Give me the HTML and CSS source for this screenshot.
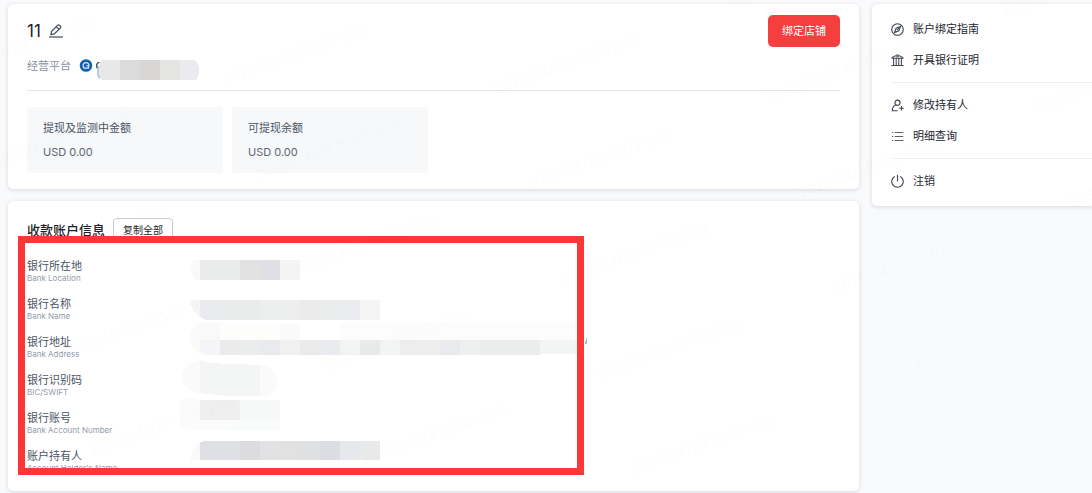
FILE: index.html
```
<!DOCTYPE html>
<html lang="zh-CN">
<head>
  <meta charset="utf-8">
  <title>收款账户</title>
  <link rel="stylesheet" href="styles.css">
</head>
<body>
  <div class="page">
    <main class="main">
      <section class="card account">
        <div class="account-head">
          <h1>11</h1>
          <button class="icon-button" type="button" aria-label="编辑">
            <svg width="14" height="14" viewBox="0 0 14 14" fill="none" stroke="#4b5260" stroke-width="1.3">
              <path d="M2 10.6 2.6 7.4 8.4 1.4Q9.5.4 10.6 1.4L11.2 2Q12.2 3.1 11.2 4.2L5.2 10ZM7.3 2.8 9.9 5.4" />
              <path d="M0 13H14" stroke="#8d949c" stroke-width="2" />
            </svg>
          </button>
          <button class="bind-button" type="button">绑定店铺</button>
        </div>

        <div class="platform">
          <span>经营平台</span>
          <svg class="platform-logo" width="120" height="22" viewBox="79 58 120 22">
            <circle cx="86" cy="65.5" r="6.3" fill="#1660ab" />
            <circle cx="86" cy="65.5" r="2.9" fill="none" stroke="#d7e7f7" stroke-width="1.2" />
            <path d="M86.2 65.8H88.5V68.6" fill="none" stroke="#d7e7f7" />
            <path d="M99.5 62.5Q96.7 62.5 96.7 65.5T98 68.5" fill="none" stroke="#29303b" stroke-width="1.2" />
            <g shape-rendering="crispEdges">
              <path d="M100 64Q97 67 97 72T100 80Z" fill="#b9cfe6" />
              <path d="M102 60H120V80H102Q99 78 99 70T102 60Z" fill="#e8e8e9" />
              <path d="M120 60H140V80H120Z" fill="#dcdbdc" />
              <path d="M140 60H160V80H140Z" fill="#d9d7d5" />
              <path d="M160 60H180V80H160Z" fill="#e4e4e2" />
              <path d="M180 60H194Q199 63 199 70T196 80H180Z" fill="#eaebee" />
            </g>
          </svg>
        </div>

        <div class="stats">
          <div class="stat">
            <span>提现及监测中金额</span>
            <span class="amount">USD 0.00</span>
          </div>
          <div class="stat">
            <span>可提现余额</span>
            <span class="amount">USD 0.00</span>
          </div>
        </div>
      </section>

      <section class="card bank">
        <div class="bank-head">
          <h2>收款账户信息</h2>
          <button class="copy-button" type="button">复制全部</button>
        </div>

        <dl class="bank-list">
          <dt>银行所在地 <small>Bank Location</small></dt>
          <dt>银行名称 <small>Bank Name</small></dt>
          <dt>银行地址 <small>Bank Address</small></dt>
          <dt>银行识别码 <small>BIC/SWIFT</small></dt>
          <dt>银行账号 <small>Bank Account Number</small></dt>
          <dt>账户持有人 <small>Account Holder's Name</small></dt>
        </dl>

        <!-- Masked values -->
        <svg class="masks" width="410" height="230" viewBox="180 250 410 230" shape-rendering="crispEdges" aria-hidden="true">
          <!-- Bank location -->
          <path d="M200 260H194Q191 264 191 270T196 280H200Z" fill="#f9f9f9" />
          <path d="M200 260H240V280H200Z" fill="#e9ebea" />
          <path d="M240 260H260V280H240Z" fill="#e3e2e3" />
          <path d="M260 260H280V280H260Z" fill="#dfe0e5" />
          <path d="M280 260H300V280H280Z" fill="#f4f4f4" />
          <!-- Bank name -->
          <path d="M190 300H200V317Q191 312 190 300Z" fill="#f6f6f7" />
          <path d="M200 300H220V320H206L200 317Z" fill="#e9eaed" />
          <path d="M220 300H260V320H220Z" fill="#e9ecea" />
          <path d="M260 300H300V320H260Z" fill="#edefee" />
          <path d="M300 300H320V320H300Z" fill="#ecebeb" />
          <path d="M320 300H340V320H320Z" fill="#ebedec" />
          <path d="M340 300H360V320H340Z" fill="#ebecef" />
          <path d="M360 300H380V320H360Z" fill="#f5f5f6" />
          <!-- Bank address -->
          <path d="M220 323H200Q190 328 190 340H220Z" fill="#f9f9f9" />
          <path d="M220 323H280V340H220Z" fill="#fdfdfc" />
          <path d="M280 323H300V340H280Z" fill="#fafafa" />
          <path d="M340 323H577V340H340Z" fill="#fcfcfc" />
          <path d="M190 340H200V354Q193 350 190 340Z" fill="#fbfaf8" />
          <path d="M200 340H220V355H204L200 353Z" fill="#f4f5f8" />
          <path d="M220 340H240V355H220Z" fill="#ecebec" />
          <path d="M240 340H260V355H240Z" fill="#ebedec" />
          <path d="M260 340H280V355H260Z" fill="#e9eaee" />
          <path d="M280 340H300V355H280Z" fill="#f0f0f1" />
          <path d="M300 340H320V355H300Z" fill="#ebeaea" />
          <path d="M320 340H340V355H320Z" fill="#eaebee" />
          <path d="M340 340H360V355H340Z" fill="#f2f5f4" />
          <path d="M360 340H380V355H360Z" fill="#e8ebea" />
          <path d="M380 340H400V355H380Z" fill="#f3f5f4" />
          <path d="M400 340H440V355H400Z" fill="#eeedee" />
          <path d="M440 340H460V355H440Z" fill="#e9eaee" />
          <path d="M460 340H480V355H460Z" fill="#eef0ef" />
          <path d="M480 340H540V355H480Z" fill="#ebecec" />
          <path d="M540 340H577V354H540Z" fill="#f3f5f5" />
          <path d="M585 341H586V344H585ZM586 338H587V344H586Z" fill="#92c6ef" />
          <!-- BIC/SWIFT -->
          <path d="M200 360Q182 364 182 377T200 394Z" fill="#fafafb" />
          <path d="M200 360 208 363 260 365V396L226 396 200 393Z" fill="#f4f5f5" />
          <path d="M260 365Q277 367 277 381T260 397Z" fill="#f9faf9" />
          <!-- Bank account number -->
          <path d="M200 399Q182 398 180 401V427Q188 430 200 430Z" fill="#fbfbfb" />
          <path d="M200 400H240V420H200Z" fill="#efefef" />
          <path d="M240 400H280V420H240Z" fill="#f7f9f8" />
          <path d="M200 420H280V431H260L200 430Z" fill="#fafcfb" />
          <!-- Account holder -->
          <path d="M200 442Q191 447 191 460H200Z" fill="#f9f9fa" />
          <path d="M200 442 205 441H240V460H200Z" fill="#dfe0e3" />
          <path d="M240 441H260V460H240Z" fill="#dcdcde" />
          <path d="M260 441H280V460H260Z" fill="#e1e2e4" />
          <path d="M280 441H300V460H280Z" fill="#e0e1e0" />
          <path d="M300 441H320V460H300Z" fill="#dfe0e1" />
          <path d="M320 441H340V460H320Z" fill="#dcdde2" />
          <path d="M340 441H360V460H340Z" fill="#e7e8eb" />
          <path d="M360 441H380V460H360Z" fill="#e9ebea" />
        </svg>
        <div class="highlight"></div>
      </section>
    </main>

    <aside class="card side">
      <ul>
        <li><a href="#">
          <svg width="13" height="13" viewBox="0 0 14 14" fill="none" stroke="#3f4450" stroke-width="1.2">
            <circle cx="7" cy="7" r="6.2" />
            <path d="M10.2 3.8 8.5 8.5 3.8 10.2 5.5 5.5Z" />
            <path d="M6.3 7.7 8.5 5.5" />
          </svg>
          账户绑定指南</a></li>
        <li><a href="#">
          <svg width="13" height="13" viewBox="0 0 14 14" fill="none" stroke="#3f4450" stroke-width="1.1">
            <path d="M1.2 4.5V3.8L7 .8 12.8 3.8V4.500ZM.5 12.5H13.500M2.800 4.500V12.500M5.600 4.500V12.500M8.400 4.500V12.500M11.200 4.500V12.500" />
            <path d="M5.500 3H8.500" />
          </svg>
          开具银行证明</a></li>
      </ul>
      <ul>
        <li><a href="#">
          <svg width="13" height="13" viewBox="0 0 14 14" fill="none" stroke="#3f4450" stroke-width="1.2">
            <circle cx="7" cy="4" r="2.8" />
            <path d="M5.3 6.3Q1.400 8 1.400 12.600H7.200M8.800 10H13.800M11.300 7.500V12.500" />
          </svg>
          修改持有人</a></li>
        <li><a href="#">
          <svg width="13" height="13" viewBox="0 0 14 14" fill="none" stroke="#5b606a" stroke-width="1.2">
            <path d="M1 2.700H2.500M1 7H2.500M1 11.300H2.500M4 2.700H13.200M4 7H13.200M4 11.300H13.200" />
          </svg>
          明细查询</a></li>
      </ul>
      <ul>
        <li><a href="#">
          <svg width="13" height="13" viewBox="0 0 14 14" fill="none" stroke="#3f4450" stroke-width="1.2">
            <path d="M4 1.500A6.200 6.200 0 1 0 10 1.500M7 0V7" />
          </svg>
          注销</a></li>
      </ul>
    </aside>
  </div>

  <svg class="watermark" aria-hidden="true">
    <defs>
      <text id="mark" transform="rotate(-20)">2025/04/28 16:03-jincj</text>
      <g id="mark-row">
        <use href="#mark" x="-317" y="67" />
        <use href="#mark" x="-46" y="76" />
        <use href="#mark" x="225" y="85" />
        <use href="#mark" x="496" y="94" />
        <use href="#mark" x="767" y="103" />
        <use href="#mark" x="1038" y="112" />
      </g>
    </defs>
    <use href="#mark-row" x="-34" y="-95" />
    <use href="#mark-row" />
    <use href="#mark-row" x="34" y="95" />
    <use href="#mark-row" x="69" y="190" />
    <use href="#mark-row" x="103" y="285" />
    <use href="#mark-row" x="138" y="380" />
    <use href="#mark-row" x="172" y="475" />
  </svg>
</body>
</html>
```
FILE: styles.css
```
* {
  box-sizing: border-box;
}
body {
  margin: 0;
  background: #f9fafc;
  color: #4b5565;
  font-family: Inter, "Noto Sans CJK SC", sans-serif;
  font-size: 11px;
  line-height: 16px;
}
h1, h2, ul, dl {
  margin: 0;
  padding: 0;
}
button {
  font: inherit;
  cursor: pointer;
}
.page {
  display: flex;
  align-items: flex-start;
  gap: 13px;
  padding: 4px 0 2px 8px;
  overflow: hidden;
}
.main {
  flex: 1;
  display: flex;
  flex-direction: column;
  gap: 12px;
}
.card {
  background: #fff;
  border-radius: 5px;
  box-shadow: 0 1px 4px rgba(30, 40, 60, 0.16);
}

/* Account summary */
.account {
  padding: 11px 19px 16px;
}
.account-head {
  display: flex;
  align-items: center;
  gap: 8px;
}
h1 {
  color: #1b1f29;
  font-size: 17px;
  font-weight: 400;
}
.icon-button {
  display: flex;
  padding: 0;
  border: none;
  background: none;
}
.bind-button {
  height: 32px;
  margin-left: auto;
  padding: 0 14px;
  border: none;
  border-radius: 5px;
  background: #f53f3f;
  color: #fff;
}
.platform {
  display: flex;
  height: 44px;
  padding-top: 11px;
  gap: 8px;
  border-bottom: 1px solid #e5e6e9;
  color: #8a93a3;
}
.stats {
  display: flex;
  gap: 9px;
  margin-top: 16px;
}
.stat {
  display: flex;
  flex-direction: column;
  gap: 8px;
  width: 196px;
  padding: 13px 16px;
  border-radius: 3px;
  background: #f7f8fa;
}
.amount {
  color: #5c6675;
}

/* Bank details */
.bank {
  position: relative;
  padding: 17px 19px 18px;
}
.bank-head {
  display: flex;
  align-items: center;
  gap: 8px;
}
h2 {
  color: #1b1f29;
  font-size: 13px;
  font-weight: 500;
}
.copy-button {
  height: 24px;
  padding: 0 9px;
  border: 1px solid #c6cbd4;
  border-radius: 4px;
  background: #fff;
  color: #1b1f29;
  font-size: 10px;
}
.bank-list {
  display: flex;
  flex-direction: column;
  gap: 14px;
  margin-top: 17px;
  line-height: 14px;
}
.bank-list small {
  display: block;
  color: #929bad;
  font-size: 8px;
  line-height: 10px;
}
.masks {
  position: absolute;
  top: 49px;
  left: 172px;
}
.highlight {
  position: absolute;
  top: 35px;
  left: 10px;
  width: 566px;
  height: 239px;
  border: 7px solid #fd3737;
}

/* Side menu */
.side {
  width: 220px;
  padding: 3px 0 3px 19px;
  border-radius: 5px 0 0 5px;
}
.side ul {
  display: flex;
  flex-direction: column;
  gap: 15px;
  padding: 14px 0;
  list-style: none;
}
.side ul + ul {
  border-top: 1px solid #eff0f2;
}
.side a {
  display: flex;
  align-items: center;
  gap: 9px;
  color: #22262f;
  text-decoration: none;
}

.watermark {
  position: fixed;
  inset: 0;
  width: 100%;
  height: 100%;
  fill: rgba(0, 0, 0, 0.016);
  font-size: 14px;
  pointer-events: none;
}
```
